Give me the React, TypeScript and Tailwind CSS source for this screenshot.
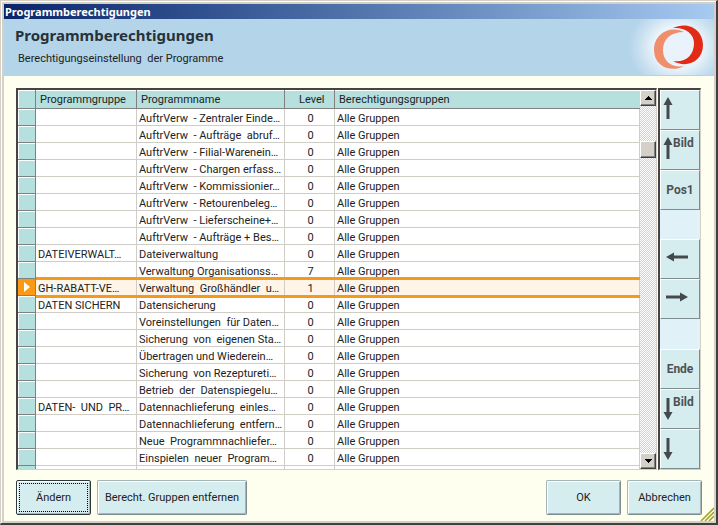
import React from "react";

type Entry = { group?: string; name: string; level: number; selected?: boolean };

const entries: Entry[] = [
  { name: "AuftrVerw  - Zentraler Einde…", level: 0 },
  { name: "AuftrVerw  - Aufträge  abruf…", level: 0 },
  { name: "AuftrVerw  - Filial-Warenein…", level: 0 },
  { name: "AuftrVerw  - Chargen erfass…", level: 0 },
  { name: "AuftrVerw  - Kommissionier…", level: 0 },
  { name: "AuftrVerw  - Retourenbeleg…", level: 0 },
  { name: "AuftrVerw  - Lieferscheine+…", level: 0 },
  { name: "AuftrVerw  - Aufträge + Bes…", level: 0 },
  { group: "DATEIVERWALT…", name: "Dateiverwaltung", level: 0 },
  { name: "Verwaltung Organisationss…", level: 7 },
  { group: "GH-RABATT-VE…", name: "Verwaltung  Großhändler  u…", level: 1, selected: true },
  { group: "DATEN SICHERN", name: "Datensicherung", level: 0 },
  { name: "Voreinstellungen  für Daten…", level: 0 },
  { name: "Sicherung  von  eigenen Sta…", level: 0 },
  { name: "Übertragen und Wiederein…", level: 0 },
  { name: "Sicherung  von Rezeptureti…", level: 0 },
  { name: "Betrieb  der  Datenspiegelu…", level: 0 },
  { group: "DATEN-  UND  PR…", name: "Datennachlieferung  einles…", level: 0 },
  { name: "Datennachlieferung  entfern…", level: 0 },
  { name: "Neue  Programmnachliefer…", level: 0 },
  { name: "Einspielen  neuer  Program…", level: 0 },
];

const rowHead = "border-r border-b border-r-[#808080] border-b-[#808080] bg-[#b5e0de] shadow-[inset_1px_1px_0_#ffffff] p-0";
const cell = "h-[17px] overflow-hidden whitespace-pre border-r border-b border-[#d0ccc6] pt-[3px] pr-0 pb-0 pl-0.5 leading-[13px]";
const headCell = "h-[19px] border-b border-[#808080] bg-[#b5e0de] pt-0.5 pr-0 pb-0 pl-1 text-left font-normal leading-4 shadow-[inset_0_1px_0_#ffffff]";
const headLine = "border-r border-r-[#808080]";

function Arrow({ turn = "" }: { turn?: string }) {
  return (
    <svg viewBox="0 0 22 22" className={"size-[22px] shrink-0 " + turn} aria-hidden="true">
      <path d="M11 0 L15.5 8 H12.5 V22 H9.5 V8 H6.5 Z" fill="#444a4c" />
    </svg>
  );
}

function KeyButton({ label, children, className = "" }: { label: string; children: React.ReactNode; className?: string }) {
  return (
    <button
      aria-label={label}
      className={"flex h-10 w-full shrink-0 border-t border-l border-r border-b border-t-white border-l-white border-r-[#7d8c8e] border-b-[#7d8c8e] bg-[#d6edf0] text-[12px] leading-4 font-bold text-[#4c5254] " + className}
    >
      {children}
    </button>
  );
}

function ScrollButton({ label, down = false }: { label: string; down?: boolean }) {
  return (
    <button aria-label={label} className="flex h-4 w-4 shrink-0 items-center justify-center border border-t-white border-l-white border-r-[#404040] border-b-[#404040] bg-[#d4d0c8] shadow-[inset_-1px_-1px_0_#808080]">
      <svg viewBox="0 0 7 4" className={down ? "h-1 w-[7px] rotate-180" : "h-1 w-[7px]"} shapeRendering="crispEdges" aria-hidden="true">
        <path d="M3 0h1v1h1v1h1v1h1v1H0V3h1V2h1V1h1z" />
      </svg>
    </button>
  );
}

const action = "h-[35px] rounded-[2px] border border-t-[#a5b4b5] border-l-[#a5b4b5] border-r-[#7d8c8e] border-b-[#7d8c8e] bg-[#d6edf0] leading-4 shadow-[inset_1px_1px_0_#ffffff,inset_-1px_-1px_0_#a5b4b5]";

export default function App() {
  return (
    <div className="flex min-h-screen flex-col border-t border-r-2 border-b-2 border-l border-t-[#d4d0c8] border-r-[#404040] border-b-[#404040] border-l-[#d4d0c8] bg-[#fffff0] font-[Roboto,'Liberation_Sans',sans-serif] text-[11px] text-[#222]">
      <div className="flex grow flex-col border-t border-l border-white">
        <div className="relative flex grow flex-col border-2 border-[#d4d0c8]">
          <div className="h-[15px] bg-linear-to-r from-[#0a246a] to-[#a6caf0] pl-px font-['Noto_Sans',sans-serif] text-[11px] leading-4 font-bold text-white">Programmberechtigungen</div>
          <header className="flex h-[57px] justify-between border-b border-[#c9cdd0] bg-[#b3d4e9]">
            <div className="pl-[11px]">
              <h1 className="pt-1.5 font-['Noto_Sans',sans-serif] text-[15px] leading-5 font-bold text-[#263238]">Programmberechtigungen</h1>
              <p className="pt-1.5 pl-[3px] leading-4 whitespace-pre">Berechtigungseinstellung  der Programme</p>
            </div>
            <svg viewBox="-20 0 94 56" className="h-14 w-[94px]" aria-hidden="true">
              <defs>
                <radialGradient id="glow">
                  <stop offset="0" stopColor="#eaf4fb" />
                  <stop offset="0.5" stopColor="#e8f3fa" />
                  <stop offset="0.75" stopColor="#cbe1f0" />
                  <stop offset="1" stopColor="#b3d4e9" />
                </radialGradient>
              </defs>
              <ellipse cx="38" cy="28" rx="50" ry="44" fill="url(#glow)" />
              <path d="M44 13 C31 6 14 14 14 31 C14 48 32 54 44 47 C34 49 23 44 23 31 C23 19 32 13 44 13Z" fill="#f08e6b" />
              <path d="M33 9 C47 2 63 10 63 26 C63 42 47 50 33 42 C45 44 54 37 54 24 C54 14 44 8 33 9Z" fill="#e32a17" />
              <ellipse cx="38.500" cy="28" rx="13" ry="13" fill="#eaf2fa" fillOpacity="0.5" />
            </svg>
          </header>

          <main className="flex grow flex-col px-3 pt-3 pb-[5px]">
            <div className="flex gap-px pr-px">
              <div className="flex min-w-0 grow border-t-2 border-l-2 border-r border-b border-t-[#444] border-l-[#444] border-r-[#d4d0c8] border-b-[#d4d0c8] bg-white">
                <div className="min-w-0 flex-1">
                  <table className="w-full table-fixed border-separate border-spacing-0">
                    <colgroup>
                      <col className="w-[18px]" />
                      <col className="w-[101px]" />
                      <col className="w-[148px]" />
                      <col className="w-[50px]" />
                      <col />
                    </colgroup>
                    <thead>
                      <tr>
                        <th className={rowHead} />
                        <th className={headCell + " " + headLine}>Programmgruppe</th>
                        <th className={headCell + " " + headLine}>Programmname</th>
                        <th className={headCell + " " + headLine + " pl-3.5!"}>Level</th>
                        <th className={headCell}>Berechtigungsgruppen</th>
                      </tr>
                    </thead>
                    <tbody>
                      {entries.map((e) => (
                        <tr key={e.name} className={e.selected ? "relative bg-[#fff4e8]" : ""}>
                          <td className={rowHead}>
                            {e.selected && (
                              <>
                                <span className="flex h-4 items-center justify-center bg-[#fb9a12]">
                                  <svg viewBox="0 0 6 10" className="h-2.5 w-1.5" aria-hidden="true"><path d="M0 0 L6 5 L0 10Z" fill="#fff" /></svg>
                                </span>
                                <span className="absolute -top-0.5 right-0 -bottom-0.5 left-[18px] border-y-3 border-[#f39a1e]" />
                              </>
                            )}
                          </td>
                          <td className={cell}>{e.group}</td>
                          <td className={cell}>{e.name}</td>
                          <td className={cell + " text-center"}>{e.level}</td>
                          <td className={cell}>Alle Gruppen</td>
                        </tr>
                      ))}
                      <tr>
                        <td className="h-[3px] border-r border-[#808080] bg-[#b5e0de] p-0" />
                        <td className="border-r border-[#d0ccc6] p-0" />
                        <td className="border-r border-[#d0ccc6] p-0" />
                        <td className="border-r border-[#d0ccc6] p-0" />
                        <td className="border-r border-[#d0ccc6] p-0" />
                      </tr>
                    </tbody>
                  </table>
                </div>
                <div className="flex w-4 shrink-0 flex-col bg-[repeating-conic-gradient(#d4d0c8_0_25%,#ffffff_0_50%)] bg-[length:2px_2px]">
                  <ScrollButton label="Nach oben" />
                  <div className="mt-[35px] h-[17px] border border-t-white border-l-white border-r-[#404040] border-b-[#404040] bg-[#d4d0c8] shadow-[inset_-1px_-1px_0_#808080]" />
                  <div className="mt-auto flex"><ScrollButton label="Nach unten" down /></div>
                </div>
              </div>

              <nav className="flex w-[43px] shrink-0 flex-col border-t-2 border-l-2 border-r border-b border-t-[#444] border-l-[#444] border-r-[#d4d0c8] border-b-[#d4d0c8] bg-[#e0f2f7]">
                <KeyButton label="Hoch" className="pt-1.5"><Arrow turn="-ml-1" /></KeyButton>
                <KeyButton label="Bild hoch" className="pt-1"><Arrow turn="-ml-1 mt-0.5" /><span className="-ml-1.5">Bild</span></KeyButton>
                <KeyButton label="Pos1" className="items-center justify-center">Pos1</KeyButton>
                <KeyButton label="Links" className="mt-[29px] pt-1.5 pl-[5px]"><Arrow turn="-rotate-90" /></KeyButton>
                <KeyButton label="Rechts" className="pt-1.5 pl-[5px]"><Arrow turn="rotate-90" /></KeyButton>
                <KeyButton label="Ende" className="mt-auto items-center justify-center">Ende</KeyButton>
                <KeyButton label="Bild runter" className="pt-1"><Arrow turn="-ml-1 mt-1 rotate-180" /><span className="-ml-1.5">Bild</span></KeyButton>
                <KeyButton label="Runter" className="pt-2"><Arrow turn="-ml-1 rotate-180" /></KeyButton>
              </nav>
            </div>

            <div className="mt-2.5 flex gap-1.5">
              <button className={action + " w-[75px] border-[#30383a]! p-0.5"}>
                <span className="flex h-full items-center justify-center border border-dotted border-black">Ändern</span>
              </button>
              <button className={action + " w-[150px]"}>Berecht. Gruppen entfernen</button>
              <button className={action + " ml-auto w-[75px]"}>OK</button>
              <button className={action + " w-[75px]"}>Abbrechen</button>
            </div>
          </main>
          <svg viewBox="0 0 14 14" className="absolute right-0 bottom-0 size-3.5" aria-hidden="true">
            <path d="M1 14 L14 1 M5 14 L14 5 M9 14 L14 9" stroke="#a3a52c" strokeWidth="1.6" />
          </svg>
        </div>
      </div>
    </div>
  );
}
